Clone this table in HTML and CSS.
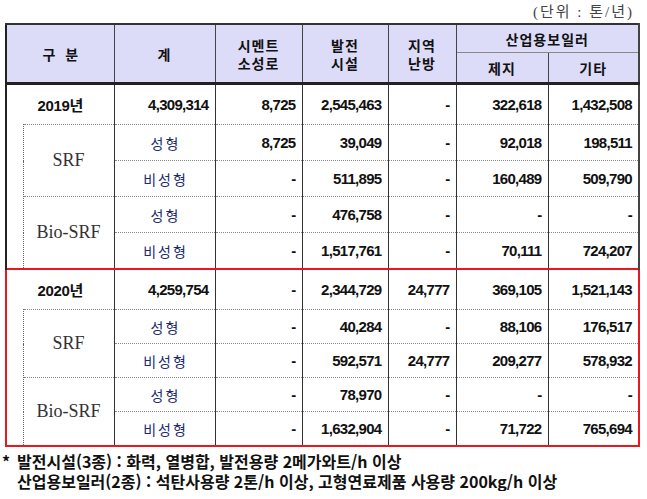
FILE: index.html
```html
<!DOCTYPE html>
<html lang="ko">
<head>
<meta charset="utf-8">
<title>SRF 사용 현황</title>
<link rel="stylesheet" href="styles.css">
</head>
<body>
<div class="page">
  <div class="unit">(단위 : 톤/년)</div>
  <table class="stat">
    <colgroup>
      <col class="c-ind"><col class="c-grp"><col class="c-tot"><col class="c-cem"><col class="c-pow"><col class="c-dist"><col class="c-pap"><col class="c-etc">
    </colgroup>
    <thead>
      <tr class="h1">
        <th colspan="2" rowspan="2" class="h-first h-gubun">구 분</th>
        <th rowspan="2">계</th>
        <th rowspan="2">시멘트<br>소성로</th>
        <th rowspan="2">발전<br>시설</th>
        <th rowspan="2">지역<br>난방</th>
        <th colspan="2" class="h-last h-ind">산업용보일러</th>
      </tr>
      <tr class="h2">
        <th class="h-sub">제지</th>
        <th class="h-sub h-last">기타</th>
      </tr>
    </thead>
    <tbody class="blk blk-a">
      <tr class="yr">
        <td colspan="2" class="year">2019년</td>
        <td class="num">4,309,314</td><td class="num">8,725</td><td class="num">2,545,463</td><td class="num">-</td><td class="num">322,618</td><td class="num last">1,432,508</td>
      </tr>
      <tr class="sub">
        <td rowspan="4" class="ind"></td>
        <td rowspan="2" class="grp">SRF</td>
        <td class="typ">성형</td>
        <td class="num">8,725</td><td class="num">39,049</td><td class="num">-</td><td class="num">92,018</td><td class="num last">198,511</td>
      </tr>
      <tr class="sub">
        <td class="typ">비성형</td>
        <td class="num">-</td><td class="num">511,895</td><td class="num">-</td><td class="num">160,489</td><td class="num last">509,790</td>
      </tr>
      <tr class="sub">
        <td rowspan="2" class="grp">Bio-SRF</td>
        <td class="typ">성형</td>
        <td class="num">-</td><td class="num">476,758</td><td class="num">-</td><td class="num">-</td><td class="num last">-</td>
      </tr>
      <tr class="sub">
        <td class="typ">비성형</td>
        <td class="num">-</td><td class="num">1,517,761</td><td class="num">-</td><td class="num">70,111</td><td class="num last">724,207</td>
      </tr>
    </tbody>
    <tbody class="blk blk-b">
      <tr class="yr">
        <td colspan="2" class="year">2020년</td>
        <td class="num">4,259,754</td><td class="num">-</td><td class="num">2,344,729</td><td class="num">24,777</td><td class="num">369,105</td><td class="num last">1,521,143</td>
      </tr>
      <tr class="sub">
        <td rowspan="4" class="ind"></td>
        <td rowspan="2" class="grp">SRF</td>
        <td class="typ">성형</td>
        <td class="num">-</td><td class="num">40,284</td><td class="num">-</td><td class="num">88,106</td><td class="num last">176,517</td>
      </tr>
      <tr class="sub">
        <td class="typ">비성형</td>
        <td class="num">-</td><td class="num">592,571</td><td class="num">24,777</td><td class="num">209,277</td><td class="num last">578,932</td>
      </tr>
      <tr class="sub">
        <td rowspan="2" class="grp">Bio-SRF</td>
        <td class="typ">성형</td>
        <td class="num">-</td><td class="num">78,970</td><td class="num">-</td><td class="num">-</td><td class="num last">-</td>
      </tr>
      <tr class="sub">
        <td class="typ">비성형</td>
        <td class="num">-</td><td class="num">1,632,904</td><td class="num">-</td><td class="num">71,722</td><td class="num last">765,694</td>
      </tr>
    </tbody>
  </table>
  <div class="note">
    <span class="star">*</span>
    <div class="note-lines">
      <div>발전시설(3종) : 화력, 열병합, 발전용량 2메가와트/h 이상</div>
      <div>산업용보일러(2종) : 석탄사용량 2톤/h 이상, 고형연료제품 사용량 200kg/h 이상</div>
    </div>
  </div>
</div>
</body>
</html>
```

FILE: styles.css
```css
html, body {
  margin: 0;
  padding: 0;
  background: #ffffff;
}

.page {
  width: 647px;
  color: #111;
}

.unit {
  height: 23px;
  line-height: 24px;
  text-align: right;
  padding-right: 13px;
  font-family: "Liberation Serif", "Noto Sans CJK KR", serif;
  font-size: 15px;
  letter-spacing: 2px;
  color: #444;
}

.stat {
  border-collapse: collapse;
  table-layout: fixed;
  width: 633px;
  margin-left: 5px;
}

.c-ind { width: 17px; }
.c-grp { width: 91px; }
.c-tot { width: 101px; }
.c-cem { width: 87px; }
.c-pow { width: 86px; }
.c-dist { width: 68px; }
.c-pap { width: 92px; }
.c-etc { width: 91px; }

/* header */
.stat th {
  background: #dcdcf8;
  border: 1px solid #444;
  border-top: 2px solid #333;
  font-family: "Noto Sans CJK KR", "Liberation Sans", sans-serif;
  font-weight: 700;
  font-size: 14px;
  line-height: 18px;
  letter-spacing: 1px;
  color: #111;
  padding: 0;
  text-align: center;
  vertical-align: middle;
}

.stat .h1 th { border-bottom: 3px solid #222; }
.stat .h1 th.h-ind { height: 27px; border-bottom: 1px solid #888; }
.stat .h2 th { height: 29px; border-top: 1px solid #888; border-bottom: 3px solid #222; }
.stat th.h-first { border-left: 2px solid #222; }
.stat th.h-last { border-right: 2px solid #444; }
.stat th.h-gubun { letter-spacing: 3px; padding-left: 3px; }

/* body */
.stat td {
  border-left: 1px solid #333;
  border-right: 1px solid #333;
  border-top: 1px dotted #888;
  border-bottom: 1px dotted #888;
  padding: 0;
  vertical-align: middle;
}

.stat .yr td { height: 39px; }
.blk-a .sub td { height: 35px; }
.blk-b .sub td { height: 33px; }

.stat td.year {
  border-left: 2px solid #222;
  border-bottom: none;
  text-align: center;
  font-family: "Liberation Sans", "Noto Sans CJK KR", sans-serif;
  font-weight: 700;
  font-size: 15px;
  letter-spacing: -0.3px;
  color: #111;
}

.stat td.ind {
  border-left: 2px solid #222;
  border-top: none;
  border-bottom: none;
  border-right: 1px dotted #666;
}

.stat td.grp {
  border-left: 1px dotted #666;
  text-align: center;
  font-family: "Liberation Serif", serif;
  font-size: 18px;
  color: #333;
}

.stat td.typ {
  text-align: center;
  font-family: "Noto Sans CJK KR", sans-serif;
  font-size: 14px;
  letter-spacing: 2px;
  padding-left: 2px;
  color: #1c2a6e;
}

.stat td.num {
  text-align: right;
  padding-right: 6px;
  font-family: "Liberation Sans", sans-serif;
  font-weight: 700;
  font-size: 15px;
  letter-spacing: -0.7px;
  color: #111;
}

.stat td.last { border-right: 2px solid #444; }

/* 2020 block, framed in red */
.stat tbody.blk-b { border: 2px solid #e8181e; }
.blk-b td.year,
.blk-b td.ind { border-left: none; }
.blk-b td.last { border-right: none; }

/* footnote */
.note {
  display: flex;
  margin-top: 4px;
  font-family: "Noto Sans CJK KR", "Liberation Sans", sans-serif;
  font-weight: 700;
  font-size: 16px;
  line-height: 20px;
  color: #111;
}

.note .star {
  width: 17px;
  padding-left: 2px;
  box-sizing: border-box;
}
```
